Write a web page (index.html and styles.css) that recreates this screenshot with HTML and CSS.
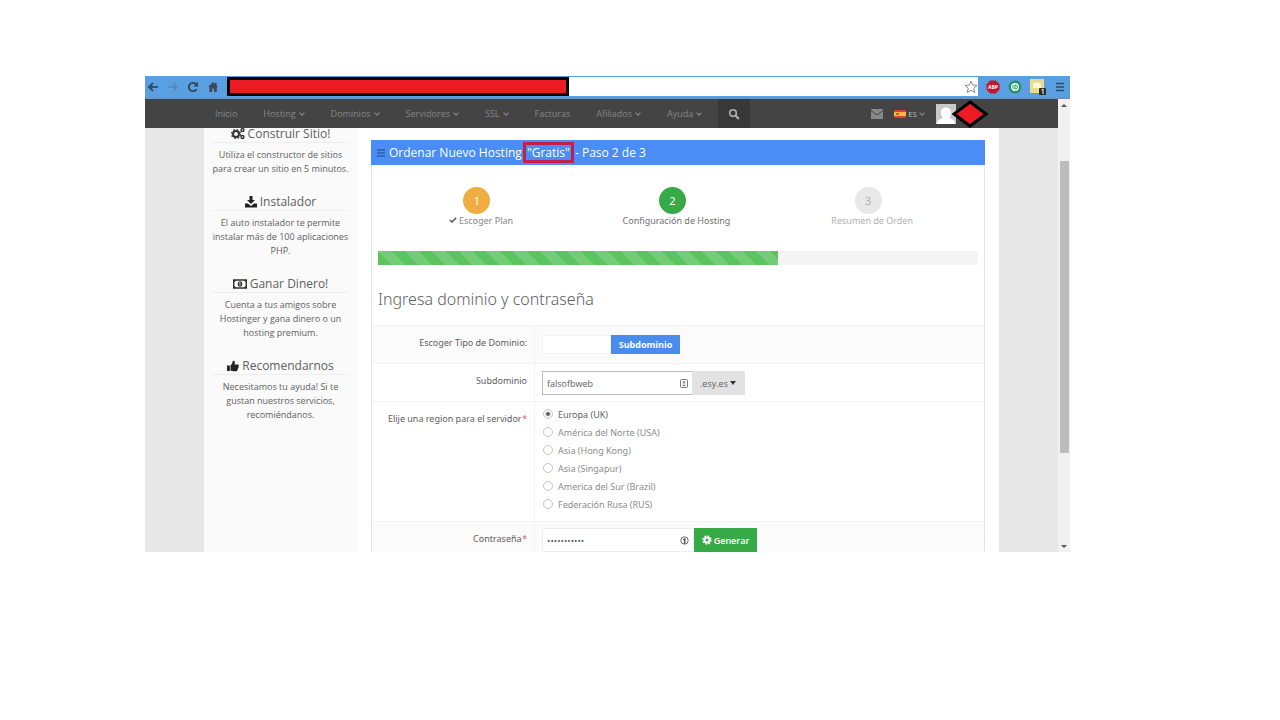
FILE: index.html
```html
<!DOCTYPE html>
<html lang="es">
<head>
    <meta charset="UTF-8">
    <meta name="viewport" content="width=device-width, initial-scale=1.0">
    <title>Ordenar Nuevo Hosting</title>
    <link rel="stylesheet" href="styles.css">
</head>
<body>
    <div class="browser">
        <div class="toolbar">
            <button class="tool" aria-label="Atrás"><svg width="12" height="12" viewBox="0 0 12 12"><path d="M11 6H2M6 2L2 6l4 4" fill="none" stroke="#2f4f6d" stroke-width="2"/></svg></button>
            <button class="tool" aria-label="Adelante"><svg width="12" height="12" viewBox="0 0 12 12"><path d="M1 6h9M6 2l4 4-4 4" fill="none" stroke="#5087bd" stroke-width="1.6"/></svg></button>
            <button class="tool" aria-label="Recargar"><svg width="12" height="12" viewBox="0 0 12 12"><path d="M9.6 8.2A4.2 4.2 0 1 1 9 3" fill="none" stroke="#2f4556" stroke-width="1.8"/><path d="M11 .8v4.6H6.4z" fill="#2f4556"/></svg></button>
            <button class="tool" aria-label="Inicio"><svg width="12" height="12" viewBox="0 0 12 12"><path d="M6 1L1 6h1.4v5h2.800V7.500h1.800V11h2.800V6H11L9.600 4.500V1.500H8v1.400z" fill="#3a4b58"/></svg></button>
            <div class="address">
                <div class="redacted"></div>
                <button class="tool star" aria-label="Marcador"><svg width="14" height="14" viewBox="0 0 14 14"><path d="M7 1l1.700 4.100 4.400.3-3.400 2.800 1.100 4.300L7 10.200l-3.800 2.300 1.100-4.300L.9 5.400l4.400-.3z" fill="#fff" stroke="#8a8a8a"/></svg></button>
            </div>
            <div class="extensions">
                <svg width="14" height="14" viewBox="0 0 14 14"><path d="M4.200.5h5.600L13.500 4.200v5.600L9.800 13.500H4.200L.5 9.800V4.200z" fill="#c3152b"/><text x="7" y="9" class="badge-text">ABP</text></svg>
                <svg width="14" height="14" viewBox="0 0 14 14"><circle cx="7" cy="7" r="6.500" fill="#1f9565"/><circle cx="7" cy="7" r="4" fill="#fff"/><path d="M5 5v4M7 5v4h.5a2 2 0 0 0 0-4z" fill="none" stroke="#1f9565"/></svg>
                <svg width="17" height="16" viewBox="0 0 17 16"><rect width="14" height="14" rx="1" fill="#e7dc91"/><path d="M3 9V5l4-2 4 2v4z" fill="#fff8d0"/><rect x="9" y="9" width="7" height="7" rx="1" fill="#2d2d25"/><path d="M11.500 11l1.500-1v5" fill="none" stroke="#fff"/></svg>
                <svg width="10" height="12" viewBox="0 0 10 12"><path d="M1 2.500h8M1 6h8M1 9.500h8" stroke="#2f4a62" stroke-width="1.600"/></svg>
            </div>
        </div>

        <div class="viewport">
            <div class="page">
                <nav class="navbar">
                    <a href="#">Inicio</a>
                    <a href="#">Hosting<i class="chevron"></i></a>
                    <a href="#">Dominios<i class="chevron"></i></a>
                    <a href="#">Servidores<i class="chevron"></i></a>
                    <a href="#">SSL<i class="chevron"></i></a>
                    <a href="#">Facturas</a>
                    <a href="#">Afiliados<i class="chevron"></i></a>
                    <a href="#">Ayuda<i class="chevron"></i></a>
                    <button class="search" aria-label="Buscar"><svg width="12" height="12" viewBox="0 0 12 12"><circle cx="5" cy="5" r="3.300" fill="none" stroke="#b4b4b4" stroke-width="1.600"/><path d="M7.500 7.500l3.300 3.500" stroke="#b4b4b4" stroke-width="2"/></svg></button>
                    <div class="account">
                        <a href="#" aria-label="Mensajes"><svg width="12" height="10" viewBox="0 0 12 10"><path d="M0 0h12v10H0z" fill="#888"/><path d="M0 1.500l6 4.500 6-4.500" fill="none" stroke="#444"/></svg></a>
                        <a href="#" class="language"><svg width="12" height="8" viewBox="0 0 12 8"><rect width="12" height="8" rx="1" fill="#d8432b"/><path d="M0 2h12v4H0z" fill="#f6bb35"/><path d="M2 3h3v2H2z" fill="#c9602b"/></svg>ES<i class="chevron"></i></a>
                        <div class="user">
                            <svg width="20" height="20" viewBox="0 0 20 20"><path d="M0 0h20v20H0z" fill="#c9c9c9"/><path d="M1 20c0-4 3-5 6-6-2-2-2-4-2-6 0-6 10-6 10 0 0 2 0 4-2 6 3 1 6 2 6 6z" fill="#fff"/></svg>
                            <svg class="diamond" width="38" height="28" viewBox="0 0 38 28"><path d="M19 2L35 14 19 26 3 14z" fill="#ed1c24" stroke="#000" stroke-width="3"/></svg>
                        </div>
                    </div>
                </nav>

                <div class="content">
                    <aside class="sidebar">
                        <section>
                            <h3><svg width="14" height="13" viewBox="0 0 14 13"><circle cx="5" cy="7" r="3" fill="none" stroke="#333" stroke-width="2"/><circle cx="5" cy="7" r="4.500" fill="none" stroke="#333" stroke-width="1.200" stroke-dasharray="1.800 1.734"/><circle cx="11.500" cy="3" r="1.500" fill="none" stroke="#333" stroke-width="1.400"/><circle cx="11.500" cy="10" r="1.500" fill="none" stroke="#333" stroke-width="1.400"/></svg>Construir Sitio!</h3>
                            <p>Utiliza el constructor de sitios para crear un sitio en 5 minutos.</p>
                        </section>
                        <section>
                            <h3><svg width="12" height="12" viewBox="0 0 12 12"><path d="M4.500 0h3v4H10L6 8 2 4h2.500zM0 7.500h3l3 2.500 3-2.500h3V11.500H0z" fill="#222"/></svg>Instalador</h3>
                            <p>El auto instalador te permite instalar más de 100 aplicaciones PHP.</p>
                        </section>
                        <section>
                            <h3><svg width="14" height="10" viewBox="0 0 14 10"><path d="M.7 1h12.600v8H.7z" fill="#fff" stroke="#333" stroke-width="1.400"/><path d="M1 1h2.500L1 3.500zM13 1h-2.500L13 3.500zM1 9h2.500L1 6.500zM13 9h-2.500L13 6.500z" fill="#333"/><ellipse cx="7" cy="5" rx="2.300" ry="2.800" fill="#333"/><path d="M6.300 4L7 3.500v3" fill="none" stroke="#fff" stroke-width=".8"/></svg>Ganar Dinero!</h3>
                            <p>Cuenta a tus amigos sobre Hostinger y gana dinero o un hosting premium.</p>
                        </section>
                        <section>
                            <h3><svg width="12" height="12" viewBox="0 0 12 12"><path d="M0 5.500h2.800V11H0zM3.500 5.500C5 4.500 5.500 3 5.800.8 8 .3 8.200 2.500 7.500 4.500H11c1 .2 1 1.500.3 1.900.6.600.3 1.500-.3 1.700.3.700 0 1.400-.6 1.600.1.900-.4 1.500-1.400 1.500H6.500c-1.200 0-2-.5-3-.7z" fill="#222"/></svg>Recomendarnos</h3>
                            <p>Necesitamos tu ayuda! Si te gustan nuestros servicios, recomiéndanos.</p>
                        </section>
                    </aside>

                    <main class="panel">
                        <h1><svg width="8" height="8" viewBox="0 0 8 8"><path d="M0 1h8M0 4h8M0 7h8" stroke="#2e5da8" stroke-width="1.400"/></svg><span>Ordenar Nuevo Hosting <mark>"Gratis"</mark> - Paso 2 de 3</span></h1>
                        <ol class="steps">
                            <li class="done"><b>1</b><span><svg width="8" height="8" viewBox="0 0 8 8"><path d="M.8 4l2.200 2L7.200 1.800" fill="none" stroke="#555" stroke-width="1.600"/></svg> Escoger Plan</span></li>
                            <li class="active"><b>2</b><span>Configuración de Hosting</span></li>
                            <li><b>3</b><span>Resumen de Orden</span></li>
                        </ol>
                        <div class="progress"><div class="bar"></div></div>
                        <h2>Ingresa dominio y contraseña</h2>

                        <form>
                            <div class="row shaded">
                                <span class="label">Escoger Tipo de Dominio:</span>
                                <div class="field">
                                    <div class="types">
                                        <button type="button" aria-label="Dominio"></button>
                                        <button type="button" class="selected">Subdominio</button>
                                    </div>
                                </div>
                            </div>
                            <div class="row">
                                <label class="label" for="subdomain">Subdominio</label>
                                <div class="field group">
                                    <div class="box bordered">
                                        <input type="text" id="subdomain" value="falsofbweb">
                                        <svg width="8" height="9" viewBox="0 0 8 9"><rect x=".5" y=".5" width="7" height="8" rx="1" fill="#fff" stroke="#777"/><path d="M2.500 3h3M2.500 6.500h3M4 2.500v3" stroke="#777"/></svg>
                                    </div>
                                    <div class="zone">
                                        <select aria-label="Extensión"><option>.esy.es</option></select>
                                        <i class="caret"></i>
                                    </div>
                                </div>
                            </div>
                            <div class="row">
                                <span class="label">Elije una region para el servidor<sup>*</sup></span>
                                <div class="field regions">
                                    <label class="current"><input type="radio" name="region" checked>Europa (UK)</label>
                                    <label><input type="radio" name="region">América del Norte (USA)</label>
                                    <label><input type="radio" name="region">Asia (Hong Kong)</label>
                                    <label><input type="radio" name="region">Asia (Singapur)</label>
                                    <label><input type="radio" name="region">America del Sur (Brazil)</label>
                                    <label><input type="radio" name="region">Federación Rusa (RUS)</label>
                                </div>
                            </div>
                            <div class="row shaded last">
                                <label class="label" for="password">Contraseña<sup>*</sup></label>
                                <div class="field group">
                                    <div class="box">
                                        <input type="password" id="password" value="abcdefghijk">
                                        <svg width="9" height="9" viewBox="0 0 9 9"><circle cx="4.500" cy="4.500" r="3.700" fill="#fff" stroke="#666"/><circle cx="4.500" cy="3.500" r="1.300" fill="#555"/><path d="M4.500 4v4M4.500 6h1.500" stroke="#555"/></svg>
                                    </div>
                                    <button type="button" class="generate"><svg width="10" height="10" viewBox="0 0 10 10"><circle cx="5" cy="5" r="2.500" fill="none" stroke="#fff" stroke-width="2"/><circle cx="5" cy="5" r="4" fill="none" stroke="#fff" stroke-width="1.400" stroke-dasharray="1.600 1.540"/></svg>Generar</button>
                                </div>
                            </div>
                        </form>
                    </main>
                </div>
            </div>

            <div class="scrollbar">
                <i class="up"></i>
                <div class="track"><div class="thumb"></div></div>
                <i class="down"></i>
            </div>
        </div>
    </div>
</body>
</html>
```

FILE: styles.css
```css
* {
    box-sizing: border-box;
}
body {
    margin: 0;
    padding: 76px 210px 0 145px;
    background-color: #ffffff;
    color: #606060;
    font-family: 'Open Sans', sans-serif;
    font-size: 9px;
}
h1, h2, h3, p, ol {
    margin: 0;
    padding: 0;
    font-weight: normal;
}
svg {
    flex: none;
}
button, input, select {
    font: inherit;
    color: inherit;
    border: none;
    border-radius: 0;
    margin: 0;
    padding: 0;
    background: none;
}
a {
    color: inherit;
    text-decoration: none;
}

/* browser toolbar */
.toolbar {
    display: flex;
    align-items: center;
    gap: 8px;
    height: 23px;
    padding: 1px 5px 1px 2px;
    background-color: #5b9fe3;
    border-bottom: 2px solid #6f93b8;
}
.tool {
    display: flex;
}
.address {
    flex: 1;
    display: flex;
    align-items: center;
    justify-content: space-between;
    height: 19px;
    background-color: #ffffff;
}
.redacted {
    width: 45.5%;
    height: 19px;
    background-color: #ed1c24;
    border: 3px solid #000000;
}
.extensions {
    display: flex;
    align-items: center;
    gap: 8px;
}
.badge-text {
    fill: #ffffff;
    font-size: 5px;
    font-weight: bold;
    text-anchor: middle;
}

.viewport {
    display: flex;
}
.page {
    flex: 1;
    background-color: #e7e7e7;
}

/* navigation */
.navbar {
    display: flex;
    align-items: center;
    gap: 26px;
    height: 29px;
    padding-left: 70px;
    background-color: #444444;
    color: #858585;
}
.navbar a {
    display: flex;
    align-items: center;
    gap: 3px;
}
.chevron {
    width: 4px;
    height: 4px;
    margin: 0 1px 2px;
    border-right: 1px solid #8c8c8c;
    border-bottom: 1px solid #8c8c8c;
    transform: rotate(45deg);
}
.search {
    display: flex;
    align-items: center;
    justify-content: center;
    width: 32px;
    height: 29px;
    margin-left: -10px;
    background-color: #383838;
}
.account {
    display: flex;
    align-items: center;
    gap: 11px;
    margin-left: auto;
    padding-right: 102px;
}
.account .language {
    gap: 2px;
    font-size: 8px;
    color: #bbbbbb;
}
.user {
    position: relative;
    display: flex;
}
.diamond {
    position: absolute;
    left: 15px;
    top: -4px;
}

/* sidebar */
.content {
    display: flex;
    margin: 0 59px;
    background-color: #ffffff;
}
.sidebar {
    width: 153px;
    padding: 0 8px;
    background-color: #fafafa;
    text-align: center;
}
.sidebar section {
    margin-bottom: 20px;
}
.sidebar section:last-child {
    margin-bottom: 0;
}
.sidebar h3 {
    display: flex;
    align-items: center;
    justify-content: center;
    gap: 3px;
    height: 15px;
    margin-bottom: 5px;
    padding-bottom: 3px;
    border-bottom: 1px solid #eeeeee;
    font-size: 12px;
    line-height: 12px;
}
.sidebar p {
    line-height: 14px;
}

/* order panel */
.panel {
    flex: 1;
    margin: 12px 14px 0;
    border: 1px solid #dde5ee;
    border-bottom: none;
}
.panel h1 {
    display: flex;
    align-items: center;
    gap: 4px;
    height: 25px;
    margin: -1px -1px 0;
    padding-left: 6px;
    background-color: #4a8df8;
    color: #ffffff;
    font-size: 12px;
}
.panel mark {
    padding: 0 2px;
    background: none;
    color: inherit;
    outline: 3px solid #c41e4a;
    outline-offset: -1px;
}
.steps {
    display: flex;
    padding: 22px 14px 0 11px;
    list-style: none;
    font-family: 'Noto Sans', sans-serif;
}
.steps li {
    flex: 1;
    display: flex;
    flex-direction: column;
    align-items: center;
    color: #b0b0b0;
}
.steps b {
    width: 27px;
    height: 27px;
    margin-right: 8px;
    border-radius: 50%;
    background-color: #e8e8e8;
    font-size: 11px;
    font-weight: normal;
    line-height: 27px;
    text-align: center;
}
.steps span {
    line-height: 14px;
}
.steps .done {
    color: #888888;
}
.steps .active {
    color: #707070;
}
.steps .done b {
    background-color: #f0ad42;
    color: #ffffff;
}
.steps .active b {
    background-color: #35aa47;
    color: #ffffff;
}
.progress {
    height: 14px;
    margin: 23px 6px 0;
    background-color: #f5f5f5;
}
.bar {
    width: 66.6%;
    height: 100%;
    background-color: #5bc45f;
    background-image: linear-gradient(45deg, rgba(255, 255, 255, 0.15) 25%, transparent 25%, transparent 50%, rgba(255, 255, 255, 0.15) 50%, rgba(255, 255, 255, 0.15) 75%, transparent 75%);
    background-size: 27px 27px;
}
.panel h2 {
    padding: 22px 6px 14px;
    font-family: 'Noto Sans', sans-serif;
    font-size: 16px;
    font-weight: 300;
    line-height: 24px;
}

/* form */
form {
    font-family: 'Noto Sans', sans-serif;
}
.row {
    display: flex;
    border-top: 1px solid #f3f3f3;
}
.shaded {
    background-color: #fbfbfb;
}
.label {
    width: 163px;
    padding: 9px 7px 0 0;
    border-right: 1px solid #f3f3f3;
    line-height: 16px;
    text-align: right;
}
sup {
    margin-left: 1px;
    color: #d9534f;
    font-size: 8px;
    line-height: 1px;
    vertical-align: baseline;
}
.field {
    flex: 1;
    padding: 7px 7px 6px;
}
.types {
    display: flex;
    padding: 2px 0 3px;
}
.types button {
    width: 69px;
    height: 19px;
    border: 1px solid #f3f3f3;
    background-color: #ffffff;
}
.types .selected {
    border-color: #4a8bee;
    background-color: #4a8bee;
    color: #ffffff;
    font-family: 'Open Sans', sans-serif;
    font-weight: bold;
}
.group {
    display: flex;
}
.box {
    display: flex;
    align-items: center;
    width: 152px;
    height: 24px;
    padding: 0 4px;
    border: 1px solid #eeeeee;
    background-color: #ffffff;
    font-family: 'Open Sans', sans-serif;
}
.box input {
    flex: 1;
    min-width: 0;
    outline: none;
}
.bordered {
    width: 150px;
    border-color: #bbbbbb;
    border-right: none;
}
.zone {
    display: flex;
    align-items: center;
    width: 53px;
    height: 24px;
    padding-left: 8px;
    background-color: #e2e2e2;
    font-family: 'Open Sans', sans-serif;
}
.zone select {
    appearance: none;
    width: 30px;
}
.caret {
    border: 3px solid transparent;
    border-top: 4px solid #333333;
    border-bottom: none;
}
.regions {
    padding-top: 3px;
    padding-bottom: 8px;
}
.regions label {
    display: flex;
    align-items: center;
    gap: 5px;
    height: 18px;
    color: #8c8c8c;
}
.regions .current {
    color: #606060;
}
.regions input {
    appearance: none;
    width: 10px;
    height: 10px;
    margin-left: 1px;
    border: 1px solid #c4c4c4;
    border-radius: 50%;
}
.regions input:checked {
    background: radial-gradient(#555555 1px, #ffffff 3px);
}
.last .field {
    padding-top: 6px;
    padding-bottom: 0;
}
.generate {
    display: flex;
    align-items: center;
    justify-content: center;
    gap: 2px;
    width: 63px;
    height: 24px;
    background-color: #35aa47;
    color: #ffffff;
    font-family: 'Open Sans', sans-serif;
    font-weight: 600;
}

/* scrollbar */
.scrollbar {
    display: flex;
    flex-direction: column;
    align-items: center;
    width: 12px;
    padding: 5px 0 4px;
    background-color: #f1f1f1;
}
.up, .down {
    border: 3px solid transparent;
}
.up {
    border-top: none;
    border-bottom: 3px solid #555555;
}
.down {
    border-bottom: none;
    border-top: 3px solid #555555;
}
.track {
    flex: 1;
    width: 9px;
    padding-top: 54px;
}
.thumb {
    height: 76%;
    background-color: #bcbcbc;
}
```
